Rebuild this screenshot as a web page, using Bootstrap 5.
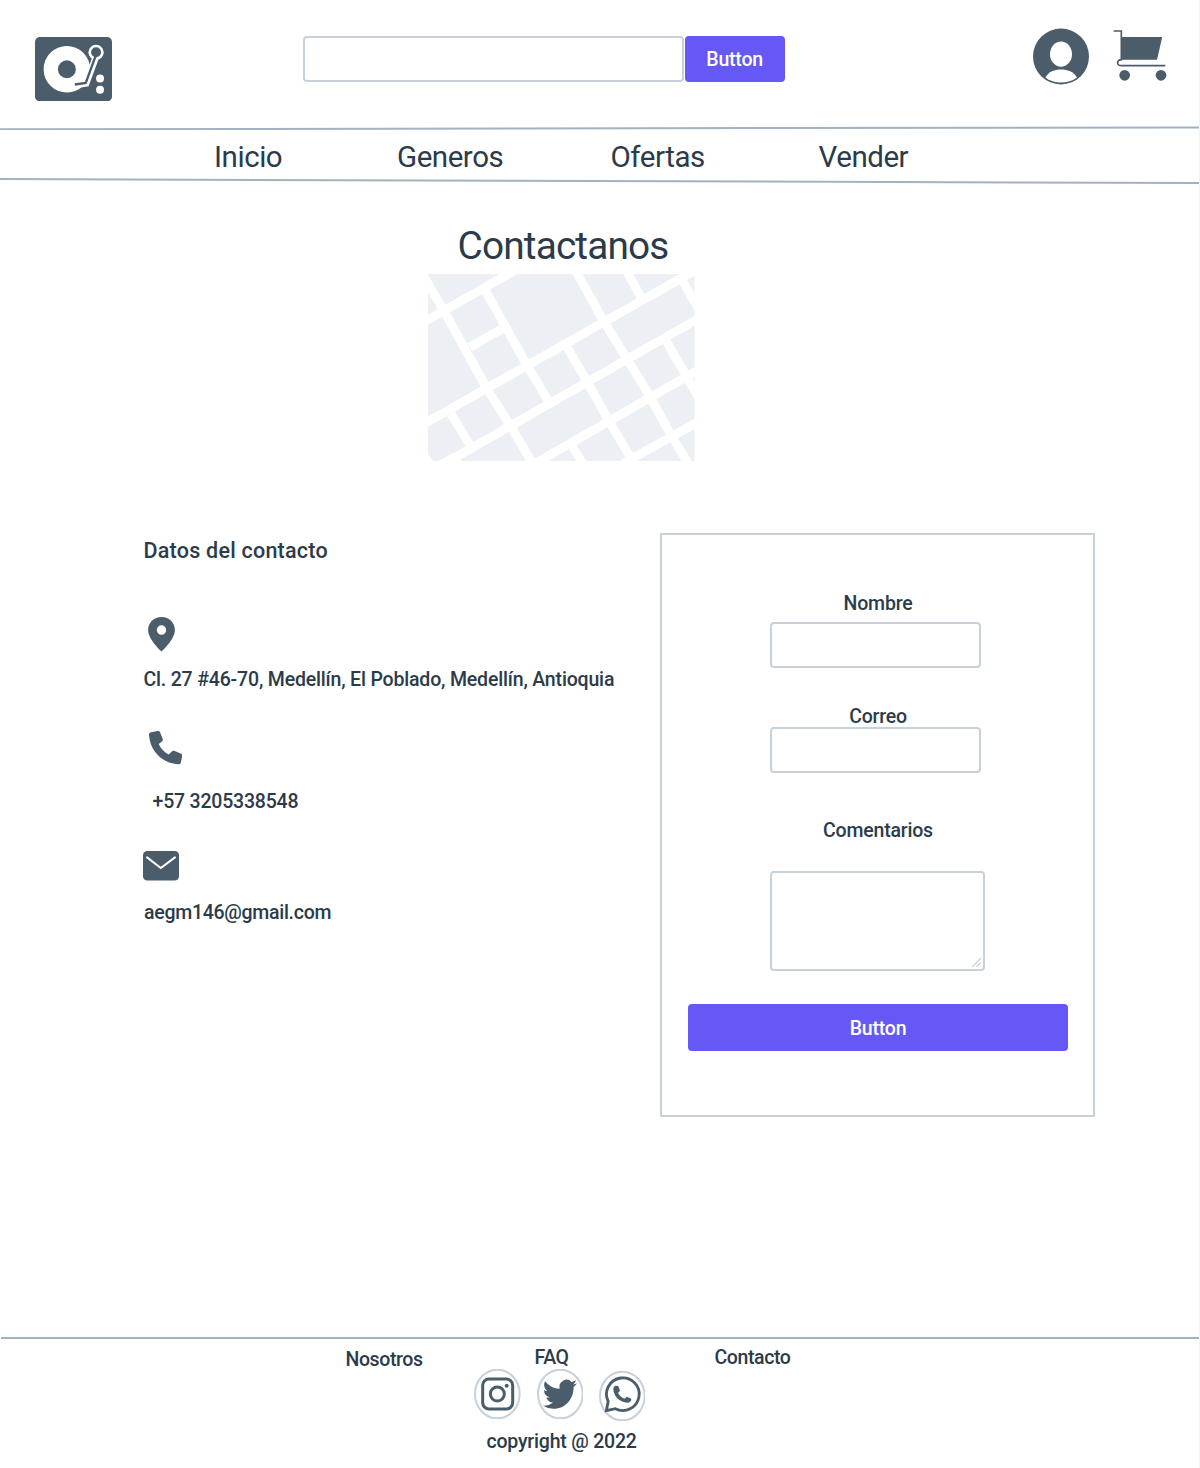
<!DOCTYPE html>
<html lang="es">
<head>
<meta charset="utf-8">
<meta name="viewport" content="width=device-width, initial-scale=1">
<title>Contactanos</title>
<link href="https://cdn.jsdelivr.net/npm/bootstrap@5.3.0/dist/css/bootstrap.min.css" rel="stylesheet">
<style>
  :root { --ink:#2c3b49; --icon:#4b5c6a; --edge:#c8d1da; --accent:#6558f5; }
  body { font-family:Roboto,"Liberation Sans",sans-serif; color:var(--ink); font-size:19.5px; line-height:22px; font-weight:500; letter-spacing:-.2px; background:#fff; }
  svg { display:block; flex:none; }
  .page { width:1200px; height:1468px; border-right:1px solid #f4f5f6; overflow:hidden; }
  .top { height:126px; padding:28px 32px 0 35px; }
  .brand-mark { margin-top:8.5px; }
  .search { margin:7.5px 0 0 190.6px; gap:1px; }
  .field { border:2px solid var(--edge); border-radius:4px; padding:0; height:46px; background:#fff; }
  .search .field { width:381px; }
  .btn-accent { --bs-btn-bg:var(--accent); --bs-btn-color:#fff; --bs-btn-border-width:0; --bs-btn-hover-bg:#5548e0; --bs-btn-hover-color:#fff;
    --bs-btn-border-radius:4px; --bs-btn-font-weight:500; --bs-btn-font-size:19.5px; --bs-btn-padding-y:0; --bs-btn-padding-x:0; height:46.5px; line-height:22px; letter-spacing:-.2px; padding-top:2px; }
  .search .btn-accent { width:100px; }
  .panel .btn-accent { height:47px; padding-top:3px; padding-left:1px; }
  .tools { gap:24.5px; }
  .menu { height:48px; padding:10px 0 0 214px; display:grid; grid-template-columns:183px 213.5px 208px auto; font-size:29.5px; line-height:34px; font-weight:400; letter-spacing:-.45px; }
  .menu a, .foot a { color:inherit; text-decoration:none; }
  .hero { width:1123px; padding-top:38.5px; }
  .hero h1 { font-size:38.8px; line-height:46px; font-weight:400; margin:0 0 5.5px; padding-left:3px; letter-spacing:-.85px; }
  .details { margin-top:72px; }
  .info { width:660px; padding:5px 0 0 143px; }
  .info h2 { font-size:21.5px; line-height:26px; font-weight:500; margin:0 0 53px .5px; letter-spacing:.24px; }
  .pin { margin-left:4.5px; }
  .addr { margin:17.5px 0 0 .4px; letter-spacing:-.17px; }
  .handset { margin:40px 0 0 5.5px; }
  .phone { margin:26.5px 0 0 9.5px; }
  .envelope { margin-top:38px; }
  .mail { margin:21.5px 0 0 1px; letter-spacing:-.28px; }
  .panel { width:435px; height:583.5px; border:2px solid var(--edge); padding:57.5px 25.5px 0; }
  .panel label { display:block; height:22px; padding-left:1px; }
  .panel .field { width:211px; margin-right:4px; }
  .panel #nombre { margin-top:7px; }
  .gap-correo { margin-top:38px; }
  .panel #correo { margin-top:-1px; }
  .gap-coment { margin-top:47px; }
  .panel textarea.field { width:215px; height:100px; resize:none; display:block; margin:0; }
  .area { position:relative; margin:29px 0 33px; }
  .grip { position:absolute; right:3px; bottom:3px; }
  .foot { margin-top:220px; }
  .rule { height:2px; background:#a3b2c1; margin:0 0 0 1px; }
  .links { padding:8px 0 0 345.5px; height:30px; display:grid; grid-template-columns:189px 180px auto; letter-spacing:-.4px; }
  .links a:first-child { padding-top:2px; }
  .social { padding-left:474.4px; gap:15.5px; }
  .whats { margin-top:2px; }
  .copy { margin:10px 0 0 486.5px; }
</style>
</head>
<body>
<div class="page">
  <header class="top d-flex align-items-start">
    <svg class="brand-mark" width="77" height="64.5" viewBox="44 48 232 194">
      <rect x="44" y="48" width="232" height="194" rx="15" fill="#4b5c6a"/>
      <circle cx="140" cy="145" r="70" fill="#fff"/><circle cx="140" cy="145" r="27" fill="#4b5c6a"/>
      <path d="M226 112 198 187 163 193" fill="none" stroke="#fff" stroke-width="20"/>
      <circle cx="228" cy="94" r="23" fill="#fff"/><circle cx="228" cy="94" r="15" fill="#4b5c6a"/>
      <path d="M227 104 197 186 164 191" fill="none" stroke="#4b5c6a" stroke-width="7"/>
      <circle cx="240" cy="173" r="12" fill="#fff"/><circle cx="240" cy="207" r="12" fill="#fff"/>
    </svg>
    <form class="search d-flex">
      <input class="field" type="text" aria-label="Buscar">
      <button class="btn btn-accent" type="button">Button</button>
    </form>
    <div class="tools d-flex ms-auto">
      <svg width="56" height="57" viewBox="69 40 168 170">
        <circle cx="153" cy="125" r="84" fill="#4b5c6a"/><ellipse cx="153" cy="118" rx="33" ry="38" fill="#fff"/>
        <path d="M106 188C116 170 134 164 153 164S191 170 201 188C176 208 130 208 106 188Z" fill="#fff"/>
      </svg>
      <svg width="54" height="54" viewBox="308 39 162 162">
        <path d="M310 48H333V135" fill="none" stroke="#4b5c6a" stroke-width="5"/>
        <path d="M333 66H453Q456 66 455 69L440 134H333Z" fill="#4b5c6a"/>
        <path d="M335 134C318 134 318 152 332 152H465" fill="none" stroke="#4b5c6a" stroke-width="5"/>
        <circle cx="343" cy="181" r="16" fill="#4b5c6a"/><circle cx="452" cy="181" r="16" fill="#4b5c6a"/>
      </svg>
    </div>
  </header>
  <svg width="1200" height="4" viewBox="0 0 1200 4"><path d="M0 3.300 1200 1.400" stroke="#a3b2c1" stroke-width="2"/></svg>
  <nav class="menu"><a href="#">Inicio</a><a href="#">Generos</a><a href="#">Ofertas</a><a href="#">Vender</a></nav>
  <svg width="1200" height="6" viewBox="0 0 1200 6"><path d="M0 1.100 1200 5" stroke="#a3b2c1" stroke-width="2"/></svg>

  <section class="hero d-flex flex-column align-items-center">
    <h1>Contactanos</h1>
    <svg width="266.5" height="187" viewBox="24 163 800 560" preserveAspectRatio="none">
      <path fill="#eceff4" d="M24 163H824V723H24Z"/>
      <g stroke="#fff" stroke-width="26.500" fill="none">
        <path d="M10 308 290 149M10 613 840 144M80 727 840 294M345 731 840 448M610 730 840 603M150 382 245 328"/>
        <path d="M0 151 70 270 200 505 270 615 341 735M195 210 320 435 388 548M466 151 550 302 620 415 690 530 755 648 808 735M440 380 500 482 565 600 640 725M618 151 665 235M785 178 840 275M740 365 800 470 840 540M93 582 152 678M456 678 491 735"/>
      </g>
      <path fill="#fff" d="M24 703 40 723H24ZM55 723 100 698 125 723Z"/>
    </svg>
  </section>

  <main class="details d-flex">
    <section class="info">
      <h2>Datos del contacto</h2>
      <svg class="pin" width="27" height="34.5" viewBox="53 260 80 103"><path fill="#4b5c6a" fill-rule="evenodd" d="M93 260C70 260 53 277 53 299 53 328 93 363 93 363S133 328 133 299C133 277 116 260 93 260ZM93 285a14 14 0 1 1 0 28 14 14 0 0 1 0-28Z"/></svg>
      <div class="addr">Cl. 27 #46-70, Medellín, El Poblado, Medellín, Antioquia</div>
      <svg class="handset" width="33.5" height="33.5" viewBox="56 33 100 100"><path fill="#4b5c6a" d="M56 42Q57 38 62 37L82 33Q87 32 89 37L97 57Q98 61 95 64L85 72C91 86 101 96 115 103L124 94Q127 91 131 92L152 101Q156 103 155 108L151 128Q150 133 144 132C95 130 58 92 56 42Z"/></svg>
      <div class="phone">+57 3205338548</div>
      <svg class="envelope" width="36" height="29.5" viewBox="40 392 107 88" preserveAspectRatio="none"><rect x="40" y="392" width="107" height="88" rx="13" fill="#4b5c6a"/><path d="M52 411 93 443 135 411" fill="none" stroke="#fff" stroke-width="6" stroke-linecap="round"/></svg>
      <div class="mail">aegm146@gmail.com</div>
    </section>
    <form class="panel d-flex flex-column align-items-center">
      <label for="nombre">Nombre</label>
      <input class="field" id="nombre" type="text">
      <label class="gap-correo" for="correo">Correo</label>
      <input class="field" id="correo" type="text">
      <label class="gap-coment" for="coment">Comentarios</label>
      <div class="area">
        <textarea class="field" id="coment"></textarea>
        <svg class="grip" width="11" height="11" viewBox="0 0 11 11"><path d="M1 10 10 1M5.500 10 10 5.500" stroke="#c8d1da" stroke-width="1.200"/></svg>
      </div>
      <button class="btn btn-accent w-100" type="button">Button</button>
    </form>
  </main>

  <footer class="foot">
    <div class="rule"></div>
    <div class="links"><a href="#">Nosotros</a><a href="#">FAQ</a><a href="#">Contacto</a></div>
    <div class="social d-flex">
      <svg width="46.700" height="50" viewBox="42 117 140 150"><ellipse cx="112" cy="192" rx="67" ry="73" fill="#fff" stroke="#c8d1da" stroke-width="6"/><g fill="none" stroke="#4b5c6a" stroke-width="9"><rect x="68" y="147" width="90" height="90" rx="19"/><circle cx="112" cy="192" r="21"/></g><circle cx="140" cy="167" r="6" fill="#4b5c6a"/></svg>
      <svg width="46.700" height="50" viewBox="230 117 140 150"><ellipse cx="300" cy="192" rx="67" ry="73" fill="#fff" stroke="#c8d1da" stroke-width="6"/><path transform="translate(247 136) scale(6.450 6.700)" fill="#4b5c6a" d="M5.026 15c6.038 0 9.341-5.003 9.341-9.334 0-.14 0-.282-.006-.422A6.685 6.685 0 0 0 16 3.542a6.658 6.658 0 0 1-1.889.518 3.301 3.301 0 0 0 1.447-1.817 6.533 6.533 0 0 1-2.087.793A3.286 3.286 0 0 0 7.875 6.030a9.325 9.325 0 0 1-6.767-3.429 3.289 3.289 0 0 0 1.018 4.382A3.323 3.323 0 0 1 .64 6.575v.045a3.288 3.288 0 0 0 2.632 3.218 3.203 3.203 0 0 1-.865.115 3.230 3.230 0 0 1-.614-.057 3.283 3.283 0 0 0 3.067 2.277A6.588 6.588 0 0 1 .78 13.580a6.320 6.320 0 0 1-.78-.045A9.344 9.344 0 0 0 5.026 15z"/></svg>
      <svg class="whats" width="46.700" height="50" viewBox="416 123 140 150"><ellipse cx="486" cy="198" rx="67" ry="73" fill="#fff" stroke="#c8d1da" stroke-width="6"/><path d="M443.500 214A49 49 0 1 1 465 236L438 242Z" fill="none" stroke="#4b5c6a" stroke-width="8.500"/><path fill="#4b5c6a" d="M459 178Q459 168 468 167L474 169 479 182 473 189C477 197 484 203 493 206L499 200 513 206Q513 217 501 218C480 218 460 200 459 178Z"/></svg>
    </div>
    <div class="copy">copyright @ 2022</div>
  </footer>
</div>
<script src="https://cdn.jsdelivr.net/npm/bootstrap@5.3.0/dist/js/bootstrap.bundle.min.js"></script>
</body>
</html>
